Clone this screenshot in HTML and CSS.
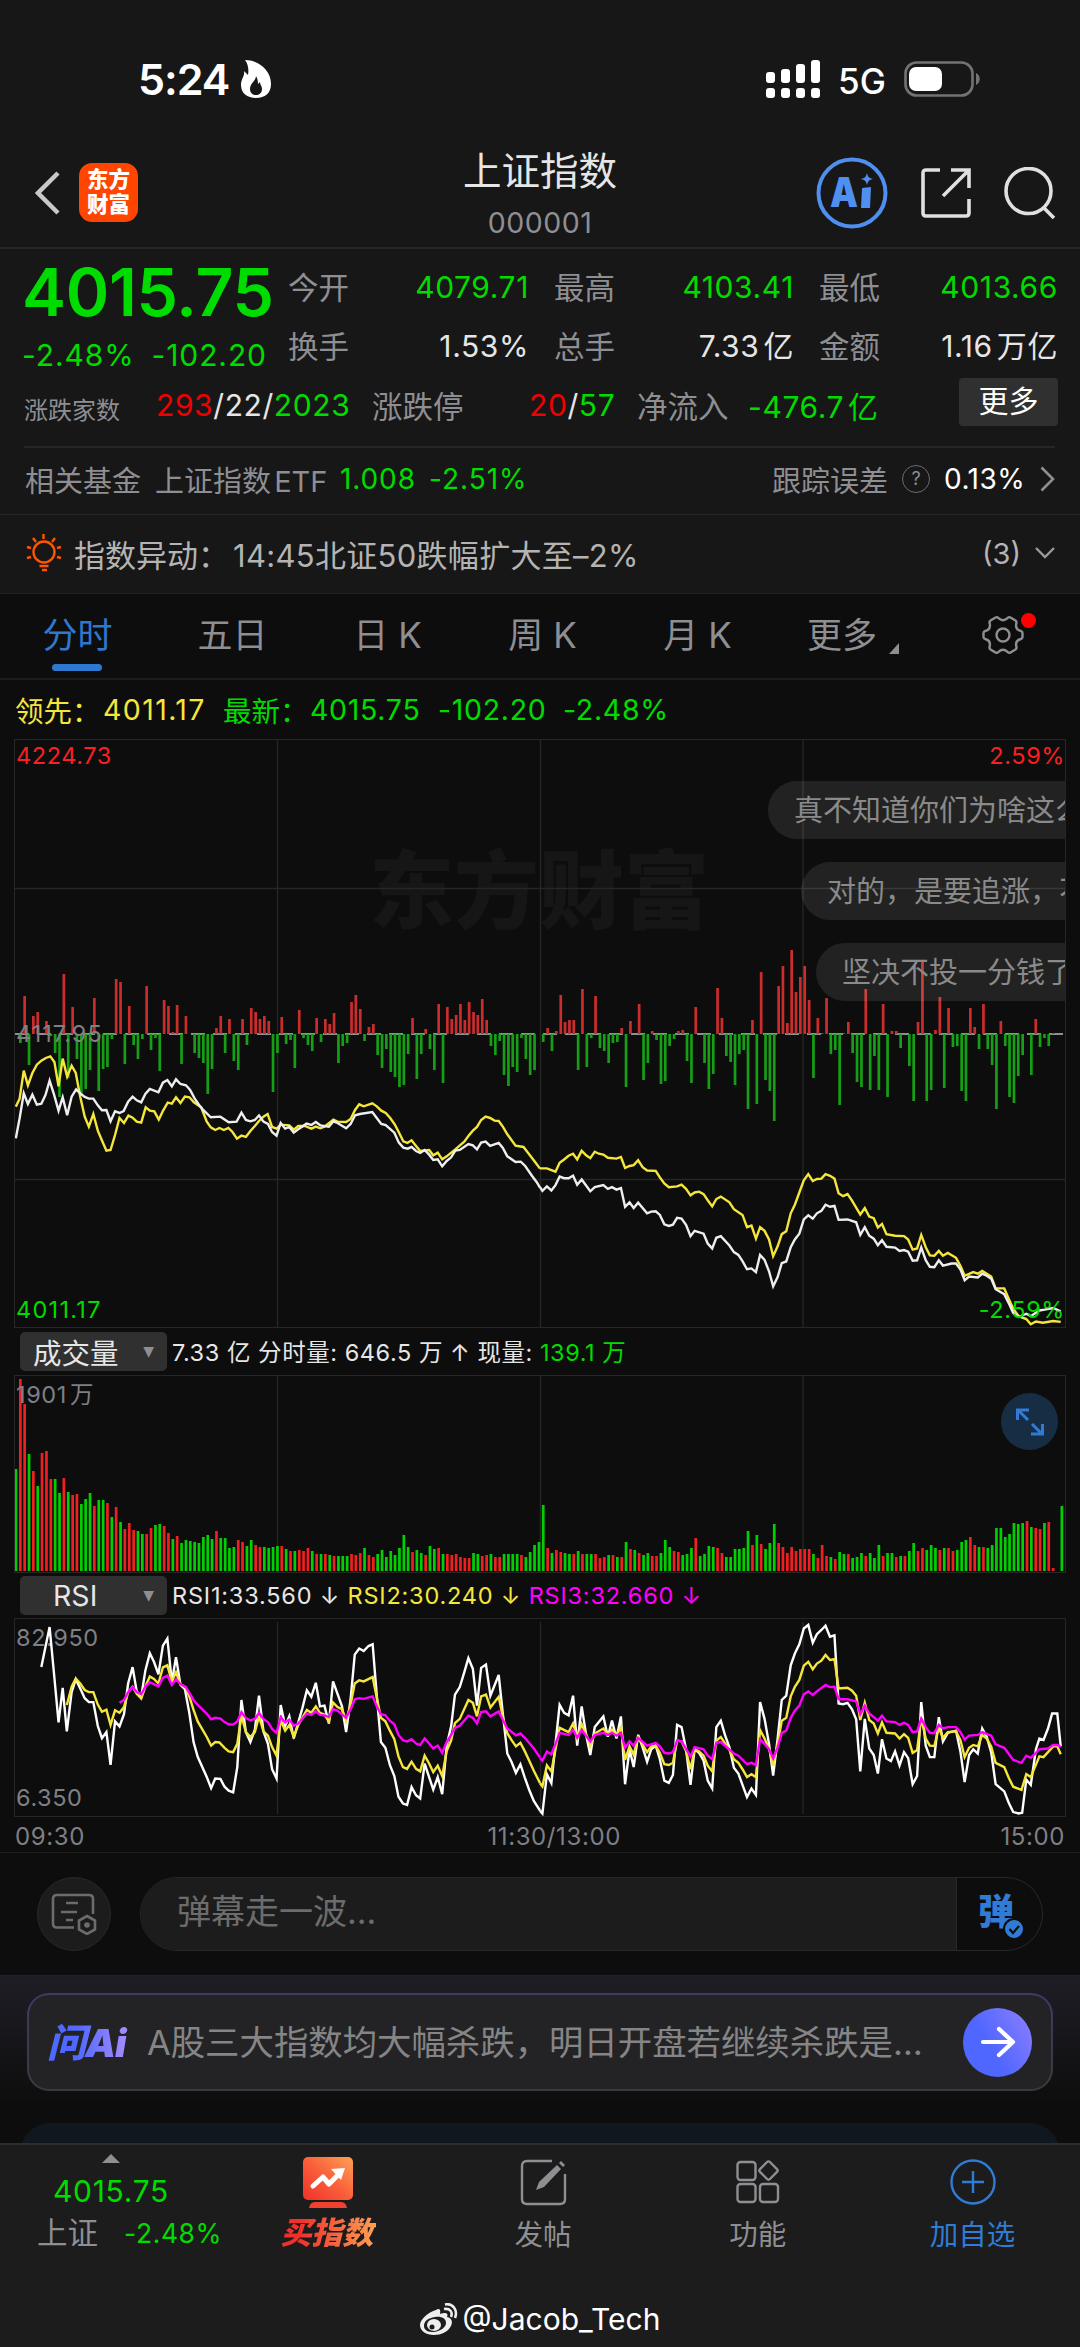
FILE: index.html
```
<!DOCTYPE html>
<html lang="zh-CN">
<head>
  <meta charset="UTF-8" />
  <meta name="viewport" content="width=device-width, initial-scale=1.0"/>
  <title>上证指数 000001</title>
  <link rel="stylesheet" href="styles.css">
</head>
<body>
  <div class="screen">

    <div class="status">
      <span class="time">5:24</span>
      <svg class="flame" width="30" height="38" viewBox="0 0 30 38"><path fill="#fff" fill-rule="evenodd" d="M4 0C17 0 30 10 30 24c0 9-6 14-15 14S0 33 0 25c0-6 4-9 3-14l4 4C8 9 7 4 4 0zm11 16c0 5-6 7-6 13 0 4 3 6 6 6s6-2 6-6c0-3-2-4-2-7l-2 2c0-4-1-6-2-8z"/></svg>
      <svg class="signal" width="54" height="38" viewBox="0 0 54 38" fill="#fff"><rect x="0" y="12" width="9" height="11" rx="3"/><rect x="15" y="9" width="9" height="14" rx="3"/><rect x="30" y="4" width="9" height="19" rx="3"/><rect x="45" y="0" width="9" height="23" rx="3"/><rect x="0" y="28" width="9" height="10" rx="3"/><rect x="15" y="28" width="9" height="10" rx="3"/><rect x="30" y="28" width="9" height="10" rx="3"/><rect x="45" y="28" width="9" height="10" rx="3"/></svg>
      <span class="net">5G</span>
      <svg width="77" height="36" viewBox="0 0 77 36"><rect x="1.5" y="1.5" width="67" height="33" rx="11" fill="none" stroke="#737373" stroke-width="2.6"/><rect x="5" y="6" width="33" height="24" rx="7" fill="#fff"/><path d="M72 12c5 2 5 10 0 12z" fill="#737373"/></svg>
    </div>

    <header class="topbar">
      <svg class="back" width="26" height="44" viewBox="0 0 26 44"><path d="M23 2L3 22l20 20" fill="none" stroke="#c9c9c9" stroke-width="4.5"/></svg>
      <div class="logo">东方<br>财富</div>
      <div class="title">
        <h1>上证指数</h1>
        <p>000001</p>
      </div>
      <div class="tools">
        <svg width="72" height="72" viewBox="0 0 72 72"><circle cx="36" cy="36" r="33.5" fill="none" stroke="#4f8ff0" stroke-width="4"/><text class="ai-text" x="14" y="50" textLength="28" lengthAdjust="spacingAndGlyphs">A</text><path d="M46 31l9-1-1 21h-9z" fill="#4f8ff0"/><path d="M51 16c1 4 2 5 6 6-4 1-5 2-6 6-1-4-2-5-6-6 4-1 5-2 6-6z" fill="#4f8ff0"/></svg>
        <svg width="50" height="50" viewBox="0 0 50 50" fill="none" stroke="#e0e0e0" stroke-width="3.6"><path d="M19 2H5Q2 2 2 5v40q0 3 3 3h40q3 0 3-3V31"/><path d="M30 2h18v18M48 2L22 28"/></svg>
        <svg width="52" height="52" viewBox="0 0 52 52" fill="none" stroke="#e0e0e0" stroke-width="3.6"><circle cx="24.500" cy="24" r="22.500"/><path d="M39 40l11 11"/></svg>
      </div>
    </header>

    <section class="quote">
      <div class="quote-head">
        <div class="now">
          <div class="price">4015.75</div>
          <div class="change"><span>-2.48%</span><span>-102.20</span></div>
        </div>
        <div class="stats">
          <span class="lb">今开</span><span class="val g">4079.71</span>
          <span class="lb">最高</span><span class="val g">4103.41</span>
          <span class="lb">最低</span><span class="val g">4013.66</span>
          <span class="lb">换手</span><span class="val">1.53%</span>
          <span class="lb">总手</span><span class="val">7.33 亿</span>
          <span class="lb">金额</span><span class="val">1.16 万亿</span>
        </div>
      </div>
      <div class="breadth">
        <span class="small">涨跌家数</span>
        <span class="num count"><b class="r">293</b>/22/<b class="g">2023</b></span>
        <span class="lb limit">涨跌停</span>
        <span class="num lim"><b class="r">20</b>/<b class="g">57</b></span>
        <span class="lb flow">净流入</span>
        <span class="num g">-476.7 亿</span>
        <span class="more">更多</span>
      </div>
    </section>

    <section class="fund">
      <span class="a">相关基金</span>
      <span class="b">上证指数 ETF</span>
      <span class="c g">1.008</span>
      <span class="e g">-2.51%</span>
      <span class="d">跟踪误差</span>
      <span class="q">?</span>
      <span class="w">0.13%</span>
      <svg class="arr" width="15" height="26" viewBox="0 0 15 26"><path d="M1.500 1.500L13 13 1.500 24.500" fill="none" stroke="#8e8e93" stroke-width="2.600"/></svg>
    </section>

    <section class="alert">
      <svg width="36" height="38" viewBox="0 0 36 38" fill="none" stroke="#ff5500" stroke-width="2.400"><circle cx="18" cy="18" r="10.500"/><path d="M17.500 0v5M7 4l3 4M29 4l-3 4M1 13l4 1M35 13l-4 1M1 24l4-1M35 24l-4-1M13.500 32h9M16 36h5"/></svg>
      <span class="msg">指数异动：<i>14:45北证50跌幅扩大至–2%</i></span>
      <span class="cnt">(3)</span>
      <svg width="20" height="12" viewBox="0 0 20 12"><path d="M1 1l9 9 9-9" fill="none" stroke="#9a9a9a" stroke-width="2.400"/></svg>
    </section>

    <nav class="tabs">
      <span class="tab on">分时</span>
      <span class="tab">五日</span>
      <span class="tab">日 K</span>
      <span class="tab">周 K</span>
      <span class="tab">月 K</span>
      <span class="tab">更多<svg class="tri" width="10" height="11"><path d="M10 0v11H0z" fill="#8e8e93"/></svg></span>
      <span class="gear">
        <svg width="42" height="40" viewBox="0 0 42 40" fill="none" stroke="#8e8e93" stroke-width="2.400"><path d="M8.500 5.500l5-3q1.500-1 3 .6 4.500 4.200 9 0 1.500-1.600 3-.6l5 3q1.500 1 .8 3-1.300 6 4.500 7.500 1.700.5 1.700 2v4q0 1.500-1.700 2-5.800 1.500-4.500 7.500.7 2-.8 3l-5 3q-1.500 1-3-.6-4.500-4.200-9 0-1.500 1.600-3 .6l-5-3q-1.500-1-.8-3 1.300-6-4.500-7.500-1.700-.5-1.700-2v-4q0-1.500 1.700-2 5.800-1.500 4.500-7.500-.7-2 .8-3z"/><circle cx="21" cy="20" r="6.500"/></svg>
        <i class="dot"></i>
      </span>
    </nav>

    <div class="legend">
      <span class="y l1">领先：</span><span class="y l2">4011.17</span>
      <span class="g l3">最新：</span><span class="g l4">4015.75</span>
      <span class="g l5">-102.20</span><span class="g">-2.48%</span>
    </div>

    <div class="chart price-chart">
      <div class="watermark">东方财富</div>
      <svg width="1050" height="587" viewBox="0 0 1050 587">
        <path class="grid" d="M0 148.500H1050M0 439.500H1050M262.500 0V587M525.500 0V587M788 0V587"/>
        <path class="zero" d="M0 294H1050"/>
        <g id="flowBars"></g>
        <!-- each session keeps its own plotting scale -->
        <g transform="translate(-15 180) scale(.3444 .3333)">
          <polyline class="ln yellow" points="46,560 57,536 69,452 81,496 94,459 107,434 120,422 133,414 146,409 158,426 170,499 182,416 195,470 208,437 220,459 233,530 246,590 258,620 271,582 284,632 297,664 309,692 321,690 334,645 347,594 360,609 373,587 385,593 397,605 410,608 423,562 435,572 448,574 461,599 474,571 487,548 499,551 511,532 524,549 537,530 550,532 563,547 584,562 600,604 612,622 625,630 637,624 650,630 663,624 675,636 688,656 701,647 714,651 727,633 740,618 752,603 765,590 777,582 790,621 803,626 815,614 840,616 853,629 866,618 885,618 904,626 917,620 930,625 942,620 968,599 980,605 1005,606 1018,597 1031,570 1043,553 1056,559 1081,550 1094,559 1107,572 1120,579 1133,594 1146,613 1158,637 1171,664 1183,669 1195,661 1208,678 1220,693 1246,690 1258,706 1271,698 1284,718 1297,709 1322,688 1348,665 1360,648 1373,632 1385,621 1397,600 1410,590 1423,594 1436,602 1448,603 1460,620 1473,643 1497,677 1520,681 1533,698 1552,724 1568,746"/>
          <polyline class="ln white" points="46,655 57,595 69,520 81,552 94,524 107,554 120,551 132,525 144,482 157,524 170,572 182,532 195,586 208,530 221,508 233,520 246,531 258,536 271,536 284,556 296,571 309,570 321,604 334,574 347,579 359,573 372,545 385,530 397,541 410,547 422,522 435,507 460,517 473,488 486,480 499,499 511,478 524,492 540,496 552,510 565,535 578,555 590,570 612,592 640,590 664,607 687,605 701,578 714,600 727,604 740,600 752,586 765,605 778,612 790,636 803,647 815,609 828,626 840,621 853,638 866,628 890,611 904,615 917,606 930,616 955,620 968,604 980,609 1005,625 1018,612 1031,586 1045,582 1081,576 1094,594 1107,612 1120,615 1145,638 1158,668 1171,683 1184,686 1195,681 1208,693 1220,699 1233,690 1246,704 1258,720 1271,718 1284,739 1297,723 1310,712 1322,692 1335,690 1360,672 1373,676 1385,688 1397,668 1410,665 1423,678 1448,669 1460,684 1473,709 1497,726 1512,725 1525,738 1545,768 1558,786 1568,803"/>
        </g>
        <g transform="translate(525 -10) scale(.3444 .4082)">
          <polyline class="ln yellow" points="0,1074 20,1074 45,1082 57,1060 70,1052 83,1043 96,1038 108,1052 121,1031 134,1042 146,1049 159,1033 171,1038 184,1040 197,1048 222,1050 235,1046 247,1073 260,1068 272,1066 285,1054 298,1071 311,1079 336,1080 348,1096 361,1111 374,1120 398,1118 411,1114 424,1124 437,1140 449,1133 462,1131 475,1137 487,1152 500,1167 512,1149 525,1143 550,1157 563,1174 588,1188 601,1218 614,1214 627,1246 639,1218 652,1227 665,1248 677,1289 690,1265 702,1235 715,1228 728,1184 740,1163 753,1133 766,1103 779,1088 792,1105 804,1100 817,1099 829,1088 842,1092 855,1099 867,1135 880,1142 893,1137 906,1153 918,1170 930,1187 943,1171 956,1192 969,1196 981,1219 993,1210 1006,1235 1031,1239 1057,1240 1069,1248 1082,1273 1095,1270 1107,1237 1120,1267 1132,1287 1145,1288 1158,1276 1170,1288 1184,1281 1208,1293 1221,1313 1233,1337 1258,1328 1271,1332 1284,1325 1310,1339 1323,1368 1348,1368 1361,1393 1374,1418 1390,1436 1412,1443 1425,1456 1440,1449 1460,1452 1490,1448 1512,1450"/>
          <polyline class="ln white" points="0,1120 7,1129 20,1118 33,1128 45,1115 57,1094 70,1098 83,1098 96,1092 108,1114 121,1101 146,1130 159,1120 184,1115 197,1124 209,1120 222,1126 235,1122 247,1168 260,1157 272,1171 285,1158 311,1184 323,1180 336,1179 348,1188 361,1211 374,1215 386,1212 398,1195 411,1197 424,1212 437,1240 449,1227 475,1234 487,1258 500,1270 512,1244 525,1240 550,1263 563,1279 576,1286 588,1301 601,1321 614,1319 627,1328 639,1286 652,1298 665,1326 677,1363 690,1340 702,1306 715,1302 728,1267 740,1248 753,1234 766,1199 779,1189 792,1197 804,1184 817,1178 829,1163 842,1168 855,1166 867,1200 893,1199 918,1206 930,1237 943,1218 956,1239 969,1246 981,1262 993,1250 1006,1266 1031,1268 1044,1276 1057,1274 1069,1278 1082,1300 1095,1299 1107,1268 1120,1299 1132,1315 1145,1316 1158,1299 1170,1312 1195,1307 1208,1307 1221,1322 1233,1348 1246,1339 1271,1341 1284,1332 1297,1337 1310,1344 1323,1370 1348,1382 1361,1404 1374,1428 1390,1438 1412,1430 1425,1436 1450,1422 1465,1420 1490,1416 1512,1424"/>
        </g>
      </svg>
      <span class="tick tl r2">4224.73</span>
      <span class="tick tr r2">2.59%</span>
      <span class="tick ml">4117.95</span>
      <span class="tick bl g">4011.17</span>
      <span class="tick br g">-2.59%</span>
      <div class="bullets">
        <span class="bullet b1">真不知道你们为啥这么</span>
        <span class="bullet b2">对的，是要追涨，不</span>
        <span class="bullet b3">坚决不投一分钱了</span>
      </div>
    </div>

    <div class="ind-head">
      <span class="pick">成交量<i>▼</i></span>
      <span>7.33 亿 分时量: 646.5 万 ↑ 现量: <b class="g">139.1 万</b></span>
    </div>
    <div class="chart vol-chart">
      <svg width="1050" height="196" viewBox="0 0 1050 196">
        <path class="grid" d="M262.500 0V196M525.500 0V196M788 0V196"/>
        <g id="volBars"></g>
      </svg>
      <span class="tick vt">1901 万</span>
      <span class="expand"><svg width="28" height="28" viewBox="0 0 28 28" fill="none" stroke="#2f7bd6" stroke-width="3"><path d="M1.500 12V2H13M2 2l10 10M26.500 16v10H15M26 26L16 16"/></svg></span>
    </div>

    <div class="ind-head rsi-head">
      <span class="pick rsi">RSI<i>▼</i></span>
      <span>RSI1:33.560 ↓ <b class="y">RSI2:30.240 ↓</b> <b class="m">RSI3:32.660 ↓</b></span>
    </div>
    <div class="chart rsi-chart">
      <span class="tick rt">82.950</span>
      <span class="tick rb">6.350</span>
      <svg width="1050" height="197" viewBox="0 0 1050 197">
        <path class="grid" d="M262.500 3V195M525.500 3V195M788 3V195"/>
        <g transform="translate(-15 -309) scale(.3444 .3571)">
          <polyline class="ln pure" points="120,1000 144,888 157,1020 170,1155 182,1058 194,1180 208,1070 220,1034 233,1060 246,1087 258,1098 271,1098 284,1165 296,1199 309,1182 321,1274 334,1152 347,1166 360,1132 372,1046 385,1000 397,1068 410,1083 422,1010 435,961 447,985 460,1020 473,940 486,920 499,1042 511,972 524,1050 537,1062 550,1130 562,1210 574,1251 600,1307 613,1339 625,1312 640,1313 652,1335 664,1346 677,1351 689,1280 701,1092 714,1182 727,1210 740,1175 752,1080 765,1180 778,1215 790,1286 803,1312 815,1106 828,1165 840,1138 853,1200 866,1155 878,1115 891,1065 904,1083 917,1044 929,1110 942,1108 955,1158 967,1040 980,1075 993,1110 1005,1182 1018,1090 1030,965 1043,948 1056,955 1070,941 1082,936 1094,1080 1106,1210 1119,1226 1132,1274 1145,1305 1157,1363 1170,1382 1182,1386 1195,1336 1208,1359 1220,1368 1233,1270 1246,1308 1258,1343 1271,1308 1284,1356 1297,1220 1310,1165 1321,1077 1335,1056 1348,1015 1360,975 1373,1005 1385,1108 1397,1002 1411,993 1424,1080 1448,1022 1460,1130 1473,1242 1485,1265 1498,1296 1511,1272 1524,1310 1537,1345 1550,1375 1568,1402"/>
          <polyline class="ln yellow" points="194,1106 208,1055 220,1032 233,1046 246,1064 258,1070 271,1070 284,1105 296,1125 309,1119 321,1162 334,1121 347,1128 360,1112 372,1070 385,1055 397,1075 410,1088 422,1055 435,1026 447,1033 460,1046 473,1001 486,995 499,1040 511,1015 524,1048 537,1055 550,1083 562,1120 574,1152 600,1195 613,1220 625,1210 637,1211 652,1226 664,1236 677,1238 689,1215 701,1136 714,1182 727,1196 740,1182 752,1138 765,1180 778,1192 790,1224 803,1248 815,1148 828,1178 840,1162 853,1195 866,1162 891,1120 904,1128 917,1110 929,1128 942,1133 955,1152 967,1099 980,1112 993,1118 1005,1150 1018,1105 1030,1046 1043,1037 1056,1040 1082,1028 1094,1085 1106,1142 1119,1152 1132,1178 1145,1202 1157,1250 1170,1280 1182,1285 1195,1265 1208,1285 1220,1292 1233,1248 1246,1270 1258,1294 1271,1276 1284,1305 1297,1235 1310,1205 1321,1157 1335,1145 1360,1092 1373,1100 1385,1138 1397,1082 1411,1077 1424,1113 1448,1083 1460,1140 1473,1185 1485,1204 1498,1222 1511,1212 1524,1236 1537,1263 1550,1290 1568,1325"/>
          <polyline class="ln magenta" points="347,1100 360,1092 372,1070 385,1056 397,1070 410,1076 422,1055 435,1042 460,1054 473,1030 486,1024 499,1050 511,1034 524,1048 540,1056 562,1092 574,1106 600,1130 613,1146 625,1142 640,1144 652,1154 664,1160 677,1161 689,1152 701,1126 714,1143 727,1149 740,1145 752,1128 765,1146 778,1154 790,1173 803,1184 815,1140 828,1155 840,1147 853,1164 866,1158 891,1130 904,1134 917,1124 929,1134 942,1135 955,1140 967,1118 980,1122 1005,1142 1018,1118 1030,1090 1043,1087 1056,1089 1082,1082 1094,1110 1106,1132 1119,1135 1132,1150 1145,1160 1157,1190 1170,1205 1182,1208 1195,1202 1208,1214 1220,1218 1233,1200 1246,1214 1258,1228 1271,1220 1284,1240 1297,1210 1310,1190 1321,1170 1335,1164 1360,1136 1373,1142 1385,1158 1397,1126 1411,1124 1424,1138 1448,1124 1460,1148 1473,1172 1498,1191 1511,1186 1524,1198 1550,1228 1568,1253"/>
        </g>
        <g transform="translate(525 -309) scale(.3444 .3571)">
          <polyline class="ln pure" points="0,1402 7,1410 20,1300 33,1325 45,1215 57,1106 70,1128 83,1135 96,1080 108,1220 121,1110 134,1190 146,1246 159,1168 184,1138 197,1195 209,1150 222,1200 235,1138 247,1328 260,1230 272,1280 285,1190 298,1225 311,1265 323,1230 336,1220 348,1258 361,1318 374,1324 386,1302 398,1162 411,1168 424,1230 437,1330 449,1230 462,1240 475,1262 487,1318 500,1340 512,1168 525,1150 537,1190 550,1225 563,1282 576,1298 588,1330 601,1364 614,1340 627,1358 639,1098 652,1145 665,1215 677,1304 690,1200 702,1092 715,1080 728,995 740,962 753,936 766,892 779,882 792,932 804,908 817,896 829,884 842,915 855,911 867,1102 880,1104 893,1100 906,1118 918,1146 930,1292 943,1145 956,1228 969,1246 981,1298 993,1202 1006,1256 1019,1263 1031,1236 1044,1275 1057,1238 1069,1255 1082,1328 1095,1305 1107,1098 1120,1220 1132,1252 1145,1252 1158,1140 1170,1208 1184,1184 1208,1178 1221,1238 1233,1322 1246,1246 1258,1230 1271,1242 1284,1172 1297,1195 1310,1238 1323,1328 1348,1348 1361,1380 1374,1406 1390,1410 1400,1408 1412,1315 1425,1330 1440,1230 1450,1200 1462,1204 1475,1172 1487,1130 1502,1130 1512,1222"/>
          <polyline class="ln yellow" points="0,1325 7,1334 20,1275 33,1292 45,1230 57,1170 83,1182 96,1158 108,1200 121,1160 134,1188 146,1220 159,1186 184,1172 197,1188 209,1175 222,1190 235,1168 247,1260 260,1222 272,1245 285,1196 311,1238 323,1222 336,1220 348,1240 361,1272 374,1274 386,1268 398,1206 411,1208 424,1235 437,1286 449,1230 462,1236 475,1248 487,1276 500,1292 512,1206 525,1196 550,1232 563,1258 576,1268 588,1286 601,1308 614,1300 627,1308 639,1176 652,1200 665,1228 677,1276 690,1215 702,1150 715,1142 728,1082 740,1055 753,1036 766,996 779,985 792,1006 804,990 817,982 829,966 842,980 855,978 867,1060 893,1058 906,1066 918,1080 930,1148 943,1100 956,1148 969,1158 981,1186 993,1155 1006,1184 1031,1186 1044,1200 1057,1188 1069,1198 1082,1240 1095,1232 1107,1142 1120,1200 1132,1220 1145,1221 1158,1170 1170,1198 1184,1182 1208,1180 1221,1205 1233,1252 1246,1226 1258,1218 1271,1222 1284,1190 1297,1200 1310,1222 1323,1268 1348,1280 1361,1310 1374,1335 1398,1344 1412,1300 1425,1308 1450,1250 1462,1252 1490,1222 1502,1222 1512,1244"/>
          <polyline class="ln magenta" points="0,1255 7,1262 20,1236 33,1244 45,1215 57,1184 83,1190 96,1176 108,1198 121,1176 146,1208 159,1190 184,1184 197,1190 209,1184 222,1192 235,1184 247,1226 260,1208 272,1220 285,1198 311,1220 336,1212 348,1222 361,1240 374,1242 386,1238 398,1206 411,1208 437,1250 449,1224 475,1230 487,1248 500,1258 512,1212 525,1210 563,1242 576,1248 601,1272 614,1268 627,1274 639,1202 652,1215 665,1230 677,1256 690,1225 702,1184 715,1178 728,1142 740,1122 753,1108 766,1076 779,1068 792,1078 804,1068 829,1050 842,1056 855,1055 867,1090 893,1090 918,1096 930,1132 943,1108 956,1130 981,1150 993,1136 1006,1152 1031,1154 1044,1162 1057,1156 1069,1162 1082,1182 1095,1180 1107,1144 1120,1168 1132,1184 1145,1185 1158,1162 1170,1172 1184,1168 1208,1168 1221,1182 1233,1203 1246,1192 1271,1190 1284,1182 1310,1192 1323,1216 1348,1226 1374,1260 1398,1268 1412,1248 1425,1254 1440,1240 1450,1230 1475,1228 1490,1218 1502,1218 1512,1224"/>
        </g>
      </svg>
    </div>
    <div class="axis"><span>09:30</span><span class="noon">11:30/13:00</span><span>15:00</span></div>

    <section class="danmu">
      <span class="round"><svg width="46" height="42" viewBox="0 0 46 42" fill="none" stroke="#6c6c6c" stroke-width="2.600"><path d="M23 34.500H6Q2 34.500 2 30.500V6Q2 2 6 2h32q4 0 4 4v15M15 10h12M10 19h16M15 27h7"/><path d="M36 23l8 4.500v9L36 41l-8-4.500v-9z"/><circle cx="36" cy="32" r="1.500" fill="#6c6c6c"/></svg></span>
      <div class="pill">
        <span class="ph">弹幕走一波...</span>
        <span class="send"><em>弹</em><svg class="ok" width="22" height="22" viewBox="0 0 22 22"><circle cx="11" cy="11" r="10" fill="#2f7bd6" stroke="#0d0d0d" stroke-width="2"/><path d="M6.500 11l3.500 4 6-7" fill="none" stroke="#0d0d0d" stroke-width="2.200"/></svg></span>
      </div>
    </section>

    <section class="ask">
      <div class="ask-box">
        <span class="ask-logo">问Ai</span>
        <span class="ask-text">A股三大指数均大幅杀跌，明日开盘若继续杀跌是…</span>
        <span class="go"><svg width="36" height="32" viewBox="0 0 36 32" fill="none" stroke="#fff" stroke-width="4.200" stroke-linecap="round" stroke-linejoin="round"><path d="M3 16h29M19 3l14 13-14 13"/></svg></span>
      </div>
      <div class="card"></div>
    </section>

    <footer class="bottom">
      <div class="items">
        <div class="idx">
          <svg width="18" height="9"><path d="M9 0l9 9H0z" fill="#8e8e93"/></svg>
          <div class="idx-price">4015.75</div>
          <div class="idx-row"><span>上证</span><b class="g">-2.48%</b></div>
        </div>
        <div class="item buy">
          <svg width="50" height="51" viewBox="0 0 50 51"><defs><linearGradient id="hot" x1="0" y1="1" x2="1" y2="0"><stop offset="0" stop-color="#f0302a"/><stop offset=".5" stop-color="#f9603a"/><stop offset="1" stop-color="#ffa055"/></linearGradient></defs><rect width="50" height="43" rx="5" fill="url(#hot)"/><path d="M6 51q1-6 6-6h26q5 0 6 6z" fill="#f0402f"/><path d="M10 29l10-9 6 7 11-11" fill="none" stroke="#fff" stroke-width="5" stroke-linecap="round" stroke-linejoin="round"/><path d="M28 12l14-1-4 12z" fill="#fff"/></svg>
          <span>买指数</span>
        </div>
        <div class="item">
          <svg width="47" height="47" viewBox="0 0 47 47" fill="none" stroke="#8e8e93" stroke-width="2.400"><path d="M32 2H7Q2 2 2 7v33q0 5 5 5h33q5 0 5-5V15"/><path d="M16 31l3-8L37 6l4 4-17 18zM39 4l2-2 4 4-2 2z" fill="#8e8e93" stroke="none"/></svg>
          <span>发帖</span>
        </div>
        <div class="item">
          <svg width="44" height="45" viewBox="0 0 44 45" fill="none" stroke="#8e8e93" stroke-width="2.400"><rect x="1.500" y="3" width="18" height="18" rx="3"/><rect x="1.500" y="25" width="18" height="18" rx="3"/><rect x="24" y="25" width="18" height="18" rx="3"/><rect x="25.500" y="4.500" width="14" height="14" rx="2" transform="rotate(45 32.500 11.500)"/></svg>
          <span>功能</span>
        </div>
        <div class="item add">
          <svg width="46" height="46" viewBox="0 0 46 46" fill="none" stroke="#2f7bd6" stroke-width="2.400"><circle cx="23" cy="23" r="21.500"/><path d="M23 12v22M12 23h22"/></svg>
          <span>加自选</span>
        </div>
      </div>
      <div class="sign">
        <svg width="38" height="33" viewBox="0 0 38 33"><path fill="#eee" fill-rule="evenodd" d="M16 7c3-2 5-1 4 4 5-2 9-1 7 3 5 1 6 5 4 9-3 6-10 9-17 9C6 32 0 28 0 22 0 16 9 9 16 7zm-1 7C8 15 4 18 4 23s5 6 10 6c7-1 12-5 12-9 0-5-5-7-11-6z"/><ellipse cx="14" cy="22" rx="7" ry="6" fill="#eee"/><circle cx="12" cy="24" r="2.500" fill="#1c1c1c"/><path d="M24 6c6-1 9 3 7 8M25 1.500C33 0 38 7 35 15" fill="none" stroke="#eee" stroke-width="2.600"/></svg>
        <span>@Jacob_Tech</span>
      </div>
    </footer>
  </div>

  <script>
    // one entry per minute, > 0 red, < 0 green
    const flow = [0,-9,38,-31,18,22,0,13,-2,-19,-63,60,-44,27,-25,-62,-55,-36,36,-57,-35,-33,-5,55,52,-30,28,-11,-25,-5,48,-16,-4,-37,34,28,2,29,-30,18,
      0,-19,-24,-29,-60,-35,6,18,-19,15,-27,-36,15,-11,26,22,15,18,13,-58,-19,17,-10,-6,-34,24,-4,-11,-17,16,-8,15,10,21,-29,-12,-9,32,39,25,
      -7,7,10,-21,-34,-15,-38,-43,-53,-51,-20,16,-45,-20,5,-15,-36,30,-49,27,15,19,30,14,32,22,19,35,14,-12,-21,-7,-41,-52,-33,-38,-4,-25,-41,-36,
      0,-8,6,-17,3,39,12,14,14,-36,45,-33,-4,38,-14,-17,-29,-9,-8,6,-53,13,0,30,-46,-29,3,-6,-50,-47,-12,-5,3,4,-27,-49,27,0,-29,-55,
      -40,46,16,-22,-28,-51,-20,-16,-75,14,-70,62,-46,-57,-87,48,68,11,84,42,57,68,34,-44,16,1,36,-20,-16,-71,1,12,-19,-48,-53,45,-56,-22,-56,30,
      -63,3,3,-14,0,-32,-67,12,72,-67,-56,4,37,-54,26,-13,-12,-57,-67,26,7,-15,30,-15,-31,-75,13,-12,-63,-69,-42,-21,0,-41,15,-13,-4,-12,1,0,0];
    const vol = [-102,192,167,-117,100,-85,118,120,92,-92,-78,93,-79,76,77,-67,-72,-78,65,-71,-71,68,-54,64,-49,42,48,41,-40,-37,37,43,-46,-47,45,38,-32,35,-28,-31,
      -30,-29,-28,-34,-36,-32,40,-33,-33,-23,-24,31,29,-25,-31,26,24,-24,-23,-24,-25,25,-22,20,-20,21,20,23,-20,17,-17,17,-16,15,-15,-15,-15,17,16,18,
      -23,16,14,-17,-21,-14,-20,-16,-23,-36,-24,19,-21,-18,16,-25,-22,23,-17,17,16,17,14,13,13,-18,-17,15,16,-17,14,14,-17,-17,-17,-17,16,-14,-19,-26,
      -29,-66,23,-18,21,19,-18,-17,17,-20,17,-17,-17,17,13,14,-16,16,-14,14,-29,22,-21,18,-16,-18,15,15,-18,-31,-24,20,19,-16,-17,-23,33,-15,-17,-25,
      -24,23,18,-14,-14,-22,-22,-23,-40,26,-36,27,-22,-28,-47,28,24,18,24,20,22,22,22,-17,13,26,15,-14,12,-19,-17,17,-13,-14,-18,15,-18,-13,-26,15,
      -18,-18,14,-15,15,-20,-28,20,23,-21,-26,-23,21,-23,23,20,-21,-29,-31,34,26,-24,24,-23,-26,-43,-43,-34,-37,-48,-47,-48,50,-44,43,42,-48,49,3,0,-65];

    function bars(id, data, base, up, down, split) {
      let html = "";
      data.forEach((v, i) => {
        const h = Math.abs(v);
        const y = split && v < 0 ? base : base - h;
        html += `<rect x="${(i * 4.358 - 0.4).toFixed(1)}" y="${y}" width="2.7" height="${h}" fill="${v > 0 ? up : down}"/>`;
      });
      document.getElementById(id).innerHTML = html;
    }
    bars("flowBars", flow, 294, "#cb2d2d", "#169e16", true);
    bars("volBars", vol, 195, "#f02020", "#00d000", false);
  </script>
</body>
</html>
```

FILE: styles.css
```
* {
  box-sizing: border-box;
}

body {
  margin: 0;
  background: #0d0d0d;
  color: #e6e6e6;
  font-family: Inter, "Noto Sans CJK SC", sans-serif;
  font-weight: 400;
}

h1, p {
  margin: 0;
  font-weight: 400;
}

b, i, em {
  font-weight: inherit;
  font-style: normal;
}

svg {
  display: block;
  flex: none;
}

.screen {
  width: 1080px;
  height: 2347px;
  overflow: hidden;
  white-space: nowrap;
}

.g { color: #00dc00; }
.r { color: #f00000; }
.r2 { color: #fa2020; }
.y { color: #f5e63c; }
.m { color: #ff00ff; }

/* status bar */
.status {
  display: flex;
  align-items: center;
  height: 138px;
  padding: 20px 0 0 138px;
  background: #171717;
  color: #fff;
}

.time {
  width: 103px;
  font-size: 43px;
  font-weight: 600;
  letter-spacing: -1px;
}

.signal {
  margin-left: 495px;
}

.net {
  width: 66px;
  margin: 4px 0 0 18px;
  font-size: 35px;
  font-weight: 500;
}

/* title bar */
.topbar {
  display: flex;
  align-items: center;
  height: 111px;
  padding-left: 35px;
  background: #171717;
  border-bottom: 2px solid #262626;
}

.logo {
  width: 59px;
  height: 59px;
  margin-left: 18px;
  padding-top: 4px;
  border-radius: 13px;
  background: #ff4500;
  color: #fff;
  font-size: 21.5px;
  font-weight: 900;
  line-height: 25px;
  text-align: center;
}

.title {
  width: 240px;
  margin-left: 282px;
  text-align: center;
}

.title h1 {
  height: 52px;
  font-size: 38.5px;
  line-height: 52px;
}

.title p {
  margin-top: 8px;
  color: #8e8e93;
  font-size: 28.5px;
  line-height: 36px;
  letter-spacing: 0.5px;
}

.tools {
  display: flex;
  align-items: center;
  gap: 33px;
  margin-left: 156px;
}

.ai-text {
  fill: #4f8ff0;
  font-size: 41px;
  font-weight: 900;
}

/* quote */
.quote {
  height: 197px;
  padding: 0 22px 0 24px;
  background: #171717;
}

.quote-head {
  display: flex;
  height: 131px;
}

.now {
  width: 264px;
  color: #00dc00;
}

.price {
  height: 82px;
  margin-left: -2px;
  font-size: 66px;
  font-weight: 600;
  line-height: 86px;
  letter-spacing: -0.3px;
}

.change {
  display: flex;
  gap: 17px;
  margin-left: -2px;
  font-size: 30px;
  line-height: 48px;
  letter-spacing: 0.9px;
}

.stats {
  display: grid;
  grid-template-columns: 62px 204px 62px 203px 62px 177px;
  grid-template-rows: 59px 59px;
  flex: none;
  padding-top: 9px;
  font-size: 30px;
  line-height: 59px;
}

.lb {
  color: #8e8e93;
  font-size: 30.5px;
}

.val {
  padding-right: 25px;
  text-align: right;
  letter-spacing: 0.6px;
  word-spacing: -5px;
}

.val:nth-child(6n) {
  padding-right: 0;
}

.breadth {
  display: flex;
  align-items: center;
  height: 50px;
  font-size: 30px;
}

.num {
  letter-spacing: 0.6px;
  word-spacing: -5px;
}

.small {
  width: 132px;
  padding-top: 7px;
  color: #8e8e93;
  font-size: 24px;
}

.count { width: 216px; }
.limit { width: 157px; }
.lim { width: 108px; }
.flow { width: 111px; }

.more {
  width: 99px;
  height: 48px;
  margin: -6px 0 0 auto;
  border-radius: 4px;
  background: #303030;
  color: #fff;
  line-height: 46px;
  text-align: center;
}

/* related fund */
.fund {
  display: flex;
  align-items: center;
  height: 69px;
  padding: 0 25px 2px;
  background: linear-gradient(#262626, #262626) 24px 0 / 1031px 2px no-repeat #171717;
  border-bottom: 1px solid #262626;
  color: #8e8e93;
  font-size: 28px;
}

.fund .g { color: #00dc00; }
.fund .a { width: 130px; font-size: 29px; }
.fund .b { width: 185px; font-size: 29px; word-spacing: -5px; }
.fund .c { width: 89px; letter-spacing: 0.9px; }
.fund .e { letter-spacing: 1px; }
.fund .d { margin-left: auto; font-size: 29px; }
.fund .w { width: 84px; margin: 0 12px 0 14px; color: #fff; letter-spacing: 0.5px; }

.q {
  width: 28px;
  height: 28px;
  margin-left: 14px;
  border: 1.5px solid #6c6c70;
  border-radius: 50%;
  font-size: 18px;
  line-height: 25px;
  text-align: center;
}

/* alert line */
.alert {
  display: flex;
  align-items: center;
  height: 79px;
  padding: 0 25px 2px 26px;
  background: #171717;
  border-bottom: 1px solid #222;
  color: #b4b4b4;
  font-size: 31px;
}

.msg {
  margin-left: 12px;
}

.msg i {
  margin-left: 4px;
  letter-spacing: 0.3px;
}

.cnt {
  margin: 0 14px 0 auto;
  font-size: 29px;
}

/* period tabs */
.tabs {
  display: flex;
  height: 86px;
  border-bottom: 2px solid #1c1c1c;
  color: #8e8e93;
  font-size: 35px;
  line-height: 83px;
}

.tab {
  position: relative;
  width: 155px;
  text-align: center;
}

.tab.on {
  color: #2f78cf;
}

.tab.on::after {
  position: absolute;
  left: 52px;
  bottom: 7px;
  width: 50px;
  height: 7px;
  border-radius: 4px;
  background: #2f78cf;
  content: "";
}

.tab:nth-child(6) {
  width: 134px;
}

.tri {
  position: absolute;
  right: 10px;
  top: 49px;
}

.gear {
  position: relative;
  margin: 21px 0 0 73px;
}

.dot {
  position: absolute;
  right: -12px;
  top: -2px;
  width: 15px;
  height: 15px;
  border-radius: 50%;
  background: #ff0000;
}

.legend {
  display: flex;
  align-items: center;
  height: 60px;
  padding: 0 0 1px 15px;
  font-size: 28.5px;
  letter-spacing: 0.7px;
}

.l1 { width: 88px; letter-spacing: 0; }
.l2 { width: 120px; letter-spacing: 1.4px; }
.l3 { width: 87px; letter-spacing: 0; }
.l4 { width: 128px; }
.l5 { width: 125px; }

/* charts */
.chart {
  position: relative;
  margin: 0 15px;
  outline: 1px solid #262626;
}

.price-chart { height: 587px; }
.vol-chart { height: 196px; }
.rsi-chart { height: 197px; }

.chart > svg {
  position: relative;
}

.grid {
  fill: none;
  stroke: #262626;
  stroke-width: 1.4;
}

.zero {
  stroke: #909094;
  stroke-width: 2;
  stroke-dasharray: 14 8;
}

.ln {
  fill: none;
  stroke-width: 2.4;
  vector-effect: non-scaling-stroke;
}

.white { stroke: #eee; }
.pure { stroke: #fff; }
.yellow { stroke: #f5e63c; }
.magenta { stroke: #ff00ff; }

.watermark {
  position: absolute;
  top: 92px;
  left: 354px;
  color: #161616;
  font-size: 85px;
  font-weight: 900;
  line-height: 120px;
}

.tick {
  position: absolute;
  left: 1px;
  color: #7f7f84;
  font-size: 23.5px;
  line-height: 28px;
  letter-spacing: 0.6px;
}

.tick.r2 { color: #fa2020; }
.tick.g { color: #00dc00; }
.tl { top: 2px; }
.tr { top: 2px; right: 0; left: auto; }
.ml { top: 280px; letter-spacing: 1px; }
.bl { top: 556px; letter-spacing: 1.3px; }
.br { top: 556px; right: 0; left: auto; }
.vt { top: 5px; word-spacing: -4px; }
.rt { top: 5px; }
.rb { top: 165px; }

.bullets {
  position: absolute;
  top: 41px;
  right: 0;
  width: 297px;
  display: flex;
  flex-direction: column;
  gap: 23px;
  overflow: hidden;
  color: #8a8a8a;
  font-size: 29px;
  line-height: 59px;
}

.bullet {
  width: 500px;
  height: 58px;
  padding-left: 26px;
  border-radius: 29px;
  background: rgba(255, 255, 255, 0.09);
}

.b2 { margin-left: 33px; }
.b3 { margin-left: 48px; }

.ind-head {
  display: flex;
  align-items: center;
  height: 49px;
  padding: 0 0 1px 20px;
  font-size: 23.5px;
  letter-spacing: 0.55px;
}

.rsi-head {
  height: 47px;
  letter-spacing: 0.8px;
}

.pick {
  display: flex;
  align-items: center;
  justify-content: space-between;
  width: 147px;
  height: 39px;
  margin-right: 5px;
  padding: 0 13px;
  border-radius: 5px;
  background: #303030;
  font-size: 28.5px;
  letter-spacing: 0;
}

.pick.rsi {
  padding-left: 33px;
}

.pick i {
  color: #8e8e93;
  font-family: "DejaVu Sans", sans-serif;
  font-size: 14px;
}

.expand {
  position: absolute;
  top: 17px;
  right: 7px;
  display: flex;
  align-items: center;
  justify-content: center;
  width: 57px;
  height: 57px;
  border-radius: 50%;
  background: #172d44;
}

.axis {
  display: flex;
  justify-content: space-between;
  height: 37px;
  padding: 0 15px;
  border-bottom: 1px solid #1f1f1f;
  color: #7f7f84;
  font-size: 24px;
  line-height: 41px;
  letter-spacing: 0.6px;
}

.noon {
  padding-left: 23px;
}

/* comment bar */
.danmu {
  display: flex;
  height: 122px;
  padding: 24px 37px;
}

.round {
  display: flex;
  align-items: center;
  justify-content: center;
  width: 74px;
  height: 74px;
  border: 1px solid #282828;
  border-radius: 50%;
  background: #1c1c1c;
}

.pill {
  display: flex;
  width: 903px;
  height: 74px;
  margin-left: 29px;
  overflow: hidden;
  border: 1px solid #282828;
  border-radius: 37px;
}

.ph {
  width: 816px;
  padding-left: 36px;
  background: #1c1c1c;
  border-right: 1px solid #282828;
  color: #6c6c6c;
  font-size: 34px;
  line-height: 67px;
}

.send {
  position: relative;
  padding-left: 21px;
  color: #2f7bd6;
  font-size: 36px;
  font-weight: 900;
  line-height: 68px;
}

.ok {
  position: absolute;
  left: 46px;
  top: 40px;
}

/* AI question */
.ask {
  display: flex;
  flex-direction: column;
  height: 169px;
  padding: 17px 20px 0;
  background: linear-gradient(#1f1e26, #0d0d0d 130px);
  border-top: 1px solid #222;
}

.ask-box {
  display: flex;
  align-items: center;
  flex: none;
  height: 98px;
  margin: 0 7px 32px;
  padding: 0 19px 0 18px;
  border: 2.5px solid transparent;
  border-radius: 22px;
  background: linear-gradient(#232325, #232325) padding-box, linear-gradient(#3c3c68, #3b393b) border-box;
}

.ask-logo {
  width: 100px;
  margin-top: -5px;
  background: linear-gradient(90deg, #4f68ff 30%, #a58cff 80%);
  background-clip: text;
  color: transparent;
  font-size: 39px;
  font-weight: 900;
  font-style: italic;
  letter-spacing: -1px;
}

.ask-text {
  margin-top: -4px;
  color: #858585;
  font-size: 34.4px;
}

.go {
  display: flex;
  align-items: center;
  justify-content: center;
  width: 69px;
  height: 69px;
  margin-left: auto;
  border-radius: 50%;
  background: linear-gradient(60deg, #4f66ff 40%, #8f80ff);
}

.card {
  flex: none;
  height: 60px;
  border-radius: 40px;
  background: #10171f;
}

/* bottom bar */
.bottom {
  position: relative;
  height: 204px;
  margin-top: -1px;
  border-top: 2px solid #2d2d2d;
  background: #1c1c1c;
  color: #8e8e93;
}

.items {
  display: flex;
  height: 146px;
}

.idx {
  width: 221px;
  padding-top: 9px;
}

.idx svg {
  margin-left: 102px;
}

.idx-price {
  margin: 8px 0 0 53px;
  color: #00dc00;
  font-size: 30px;
  line-height: 40px;
  letter-spacing: 0.7px;
}

.idx-row {
  display: flex;
  align-items: center;
  gap: 26px;
  padding-left: 37px;
  font-size: 30.5px;
  line-height: 44px;
}

.idx-row b {
  font-size: 26.5px;
  letter-spacing: 0.6px;
}

.item {
  display: flex;
  flex-direction: column;
  align-items: center;
  justify-content: space-between;
  width: 215px;
  height: 106px;
  padding-top: 14px;
  font-size: 28.5px;
  line-height: 32px;
}

.buy {
  height: 104px;
  padding-top: 12px;
}

.buy span {
  padding-right: 3px;
  background: linear-gradient(90deg, #f0302a 20%, #ffa055);
  background-clip: text;
  color: transparent;
  font-size: 31px;
  font-weight: 900;
  font-style: italic;
}

.add {
  color: #2f7bd6;
}

.sign {
  display: flex;
  align-items: center;
  justify-content: center;
  gap: 5px;
  height: 56px;
  color: #fff;
  font-size: 30px;
}
```
